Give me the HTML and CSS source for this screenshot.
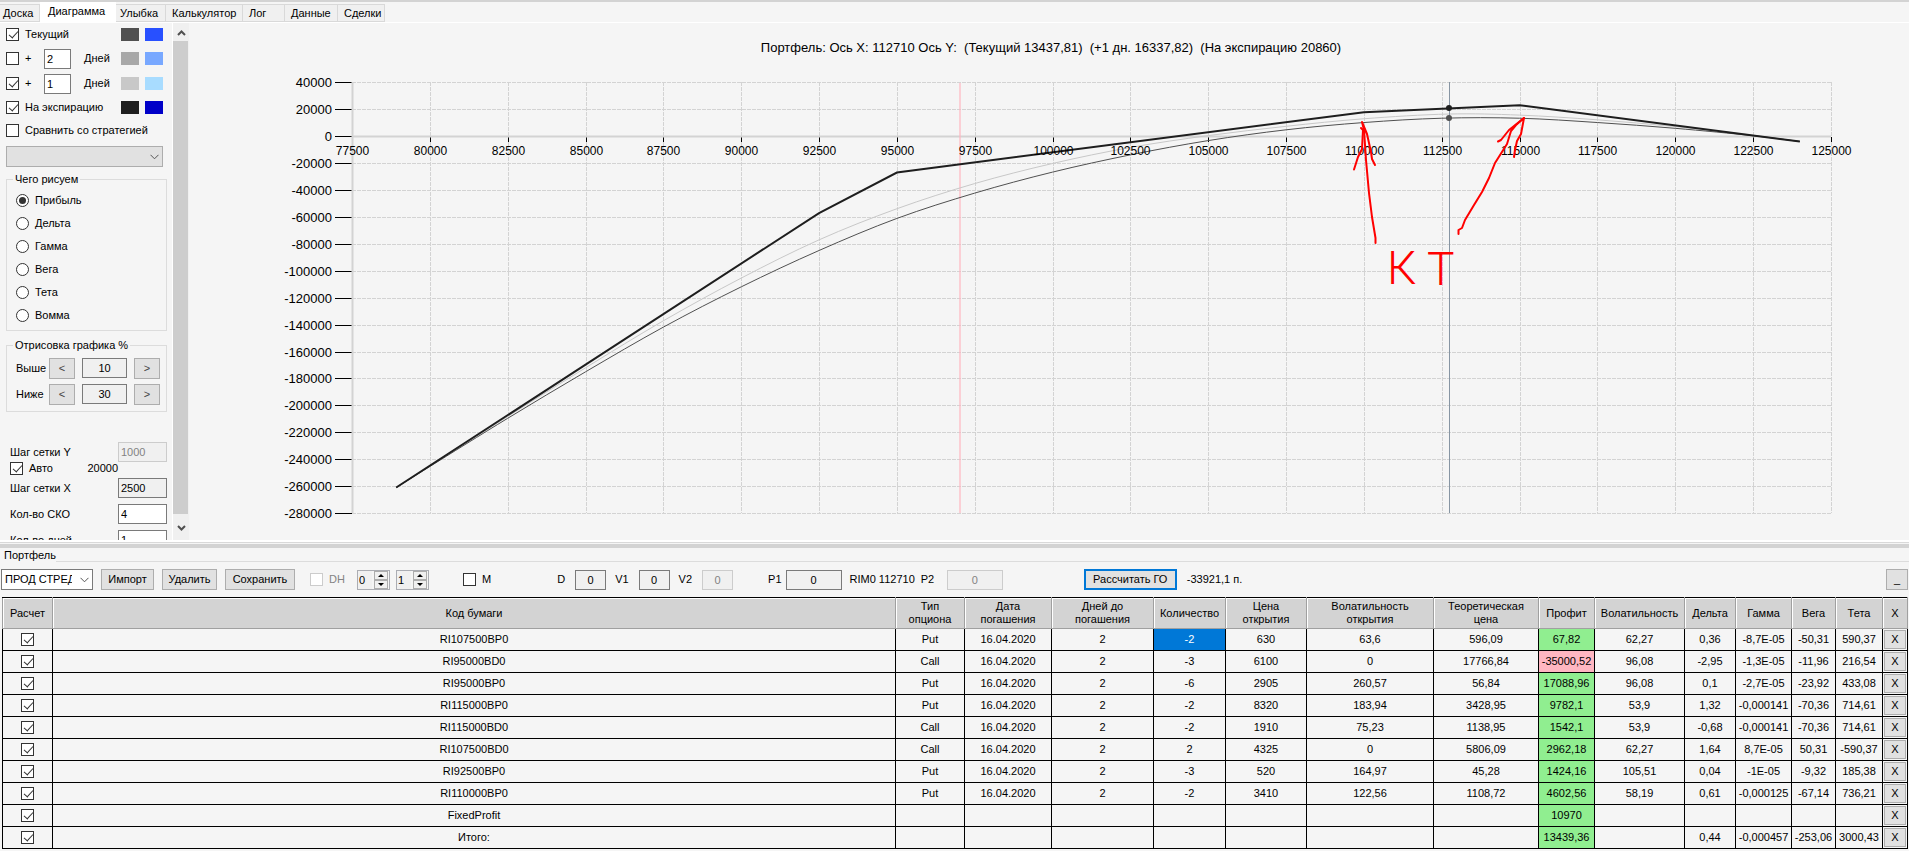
FILE: index.html
```html
<!DOCTYPE html>
<html lang="ru">

<head>
    <meta charset="UTF-8">
    <meta name="viewport" content="width=device-width, initial-scale=1.0">
    <title>Портфель</title>
    <link rel="stylesheet" href="styles.css">
</head>

<body>
<nav class="tabs">
    <button class="tab tab-board">Доска</button>
    <button class="tab tab-diagram active">Диаграмма</button>
    <button class="tab tab-smile">Улыбка</button>
    <button class="tab tab-calc">Калькулятор</button>
    <button class="tab tab-log">Лог</button>
    <button class="tab tab-data">Данные</button>
    <button class="tab tab-deals">Сделки</button>
</nav>

<main class="workspace">
    <aside class="sidebar">
        <div class="line">
            <input type="checkbox" id="current" checked>
            <label for="current" class="grow">Текущий</label>
            <i class="swatch c-dark"></i><i class="swatch c-blue"></i>
        </div>
        <div class="line line-input">
            <input type="checkbox" id="plus1">
            <label for="plus1" class="plus">+</label>
            <input type="text" class="days" id="days1" value="2">
            <label for="days1" class="grow">Дней</label>
            <i class="swatch c-gray"></i><i class="swatch c-sky"></i>
        </div>
        <div class="line line-input">
            <input type="checkbox" id="plus2" checked>
            <label for="plus2" class="plus">+</label>
            <input type="text" class="days" id="days2" value="1">
            <label for="days2" class="grow">Дней</label>
            <i class="swatch c-silver"></i><i class="swatch c-ice"></i>
        </div>
        <div class="line">
            <input type="checkbox" id="expiration" checked>
            <label for="expiration" class="grow">На экспирацию</label>
            <i class="swatch c-black"></i><i class="swatch c-navy"></i>
        </div>
        <div class="line">
            <input type="checkbox" id="compare">
            <label for="compare">Сравнить со стратегией</label>
        </div>
        <div class="combo combo-off">
            <select aria-label="Стратегия" disabled><option></option></select>
            <svg class="chevron" viewBox="0 0 9 6"><path d="M.5 .8 4.5 4.8 8.5 .8"/></svg>
        </div>

        <fieldset class="group">
            <legend>Чего рисуем</legend>
            <label class="option"><input type="radio" name="what" checked>Прибыль</label>
            <label class="option"><input type="radio" name="what">Дельта</label>
            <label class="option"><input type="radio" name="what">Гамма</label>
            <label class="option"><input type="radio" name="what">Вега</label>
            <label class="option"><input type="radio" name="what">Тета</label>
            <label class="option"><input type="radio" name="what">Вомма</label>
        </fieldset>

        <fieldset class="group range">
            <legend>Отрисовка графика %</legend>
            <div class="range-row">
                <label for="above">Выше</label>
                <button>&lt;</button>
                <input type="text" id="above" value="10" readonly>
                <button>&gt;</button>
            </div>
            <div class="range-row">
                <label for="below">Ниже</label>
                <button>&lt;</button>
                <input type="text" id="below" value="30" readonly>
                <button>&gt;</button>
            </div>
        </fieldset>

        <div class="steps">
            <div class="step">
                <label for="stepY">Шаг сетки Y</label>
                <input type="text" id="stepY" value="1000" disabled>
            </div>
            <div class="auto">
                <input type="checkbox" id="auto" checked>
                <label for="auto">Авто</label>
                <span>20000</span>
            </div>
            <div class="step">
                <label for="stepX">Шаг сетки X</label>
                <input type="text" id="stepX" value="2500" readonly>
            </div>
            <div class="step">
                <label for="sko">Кол-во СКО</label>
                <input type="text" id="sko" value="4">
            </div>
            <div class="step">
                <label for="dayCount">Кол-во дней</label>
                <input type="text" id="dayCount" value="1">
            </div>
        </div>
    </aside>

    <div class="scroll">
        <button aria-label="Вверх"><svg viewBox="0 0 9 6"><path d="M1 5 4.5 1.5 8 5"/></svg></button>
        <div class="thumb"></div>
        <button aria-label="Вниз"><svg viewBox="0 0 9 6"><path d="M1 1 4.5 4.5 8 1"/></svg></button>
    </div>

    <div class="chart">
        <svg viewBox="0 0 1720 517" preserveAspectRatio="xMinYMin meet">
            <text class="chart-title" x="862" y="29" xml:space="preserve">Портфель: Ось X: 112710 Ось Y:  (Текущий 13437,81)  (+1 дн. 16337,82)  (На экспирацию 20860)</text>
            <g id="grid"></g>
            <g id="series"></g>
            <g id="labels"></g>
            <g class="marks" transform="translate(-189 -23)">
                <path d="M1375.500 243 1375.500 238 1372 217 1369 193 1366 160 1364 130 1362 122 1367 134 1371 152 1372 159 1375 165"/>
                <path d="M1354 169.500 1358 157 1362 149 1363 130 1361 128"/>
                <path d="M1458.500 234 1458.500 230 1462 228 1465 220 1474 205 1482 192 1489 178 1495 163 1507 144 1511 131 1516 125 1524 118 1521 134 1517 141 1515 150 1514 157"/>
                <path d="M1498 141.500 1501 140 1509 130 1524 118"/>
                <text x="1387" y="284">К</text>
                <text x="1427" y="285">Т</text>
            </g>
        </svg>
    </div>
</main>

<div class="splitter"></div>

<fieldset class="portfolio">
    <legend>Портфель</legend>
    <div class="toolbar">
        <div class="tool-set">
            <div class="combo combo-name">
                <select aria-label="Портфель"><option>ПРОД СТРЕДЛ</option></select>
                <svg class="chevron" viewBox="0 0 9 6"><path d="M.5 .8 4.5 4.8 8.5 .8"/></svg>
            </div>
            <button class="btn btn-import">Импорт</button>
            <button class="btn btn-remove">Удалить</button>
            <button class="btn btn-save">Сохранить</button>
        </div>
        <div class="tool-set set-dh">
            <input type="checkbox" id="dh" disabled>
            <label for="dh" class="off">DH</label>
            <div class="spin">
                <input type="text" aria-label="DH 1" value="0">
                <span class="spin-buttons"><button aria-label="Больше"></button><button aria-label="Меньше"></button></span>
            </div>
            <div class="spin">
                <input type="text" aria-label="DH 2" value="1">
                <span class="spin-buttons"><button aria-label="Больше"></button><button aria-label="Меньше"></button></span>
            </div>
        </div>
        <div class="tool-set set-m">
            <input type="checkbox" id="m">
            <label for="m">M</label>
        </div>
        <div class="tool-set set-v">
            <label for="d">D</label><input type="text" id="d" value="0" readonly>
            <label for="v1">V1</label><input type="text" id="v1" value="0" readonly>
            <label for="v2">V2</label><input type="text" id="v2" value="0" disabled>
        </div>
        <div class="tool-set set-p">
            <label for="p1">P1</label><input type="text" id="p1" value="0" readonly>
            <span class="ticker">RIM0 112710</span>
            <label for="p2" class="p2">P2</label><input type="text" id="p2" value="0" disabled>
        </div>
        <div class="tool-set set-go">
            <button class="btn btn-go">Рассчитать ГО</button>
            <output>-33921,1 п.</output>
        </div>
        <button class="btn btn-min">_</button>
    </div>
    <table class="positions">
        <colgroup>
            <col class="w-check"><col><col class="w-type"><col class="w-date"><col class="w-days"><col class="w-count">
            <col class="w-price"><col class="w-vol-open"><col class="w-theory"><col class="w-profit"><col class="w-vol">
            <col class="w-delta"><col class="w-gamma"><col class="w-vega"><col class="w-theta"><col class="w-close">
        </colgroup>
        <thead>
        <tr>
            <th>Расчет</th>
            <th>Код бумаги</th>
            <th>Тип<br>опциона</th>
            <th>Дата<br>погашения</th>
            <th>Дней до<br>погашения</th>
            <th>Количество</th>
            <th>Цена<br>открытия</th>
            <th>Волатильность<br>открытия</th>
            <th>Теоретическая<br>цена</th>
            <th>Профит</th>
            <th>Волатильность</th>
            <th>Дельта</th>
            <th>Гамма</th>
            <th>Вега</th>
            <th>Тета</th>
            <th>X</th>
        </tr>
        </thead>
        <tbody id="rows"></tbody>
    </table>
</fieldset>

<script>
    const rows = [
      ['RI107500BP0', 'Put', '16.04.2020', '2', '-2', '630', '63,6', '596,09', '67,82', '62,27', '0,36', '-8,7E-05', '-50,31', '590,37'],
      ['RI95000BD0', 'Call', '16.04.2020', '2', '-3', '6100', '0', '17766,84', '-35000,52', '96,08', '-2,95', '-1,3E-05', '-11,96', '216,54'],
      ['RI95000BP0', 'Put', '16.04.2020', '2', '-6', '2905', '260,57', '56,84', '17088,96', '96,08', '0,1', '-2,7E-05', '-23,92', '433,08'],
      ['RI115000BP0', 'Put', '16.04.2020', '2', '-2', '8320', '183,94', '3428,95', '9782,1', '53,9', '1,32', '-0,000141', '-70,36', '714,61'],
      ['RI115000BD0', 'Call', '16.04.2020', '2', '-2', '1910', '75,23', '1138,95', '1542,1', '53,9', '-0,68', '-0,000141', '-70,36', '714,61'],
      ['RI107500BD0', 'Call', '16.04.2020', '2', '2', '4325', '0', '5806,09', '2962,18', '62,27', '1,64', '8,7E-05', '50,31', '-590,37'],
      ['RI92500BP0', 'Put', '16.04.2020', '2', '-3', '520', '164,97', '45,28', '1424,16', '105,51', '0,04', '-1E-05', '-9,32', '185,38'],
      ['RI110000BP0', 'Put', '16.04.2020', '2', '-2', '3410', '122,56', '1108,72', '4602,56', '58,19', '0,61', '-0,000125', '-67,14', '736,21'],
      ['FixedProfit', '', '', '', '', '', '', '', '10970', '', '', '', '', ''],
      ['Итого:', '', '', '', '', '', '', '', '13439,36', '', '0,44', '-0,000457', '-253,06', '3000,43']
    ]
    document.querySelector('#rows').innerHTML = rows.map((row, n) => {
      const cells = row.map((value, i) => {
        let cls = ''
        if (i === 8) cls = value[0] === '-' ? 'loss' : 'gain'
        if (n === 0 && i === 4) cls = 'selected'
        return `<td class="${cls}">${value}</td>`
      }).join('')
      return `<tr><td><input type="checkbox" aria-label="${row[0]}" checked></td>${cells}<td class="close"><button>X</button></td></tr>`
    }).join('')
</script>

<script>
    // plot area: price goes right, profit (thousands) goes up
    const X = price => 163 + (price - 77500) * 1479 / 47500
    const Y = profit => 113 - profit * 431 / 320
    const line = (cls, x1, y1, x2, y2) => `<line class="${cls}" x1="${x1}" y1="${y1}" x2="${x2}" y2="${y2}"/>`

    let grid = ''
    let labels = ''
    for (let v = 40; v >= -280; v -= 20) {
      const y = Math.round(Y(v)) + 0.5
      grid += line('dash', 163, y, 1642, y) + line('tick', 146, y, 163, y)
      labels += `<text class="label-y" x="143" y="${y + 4}">${v * 1000}</text>`
    }
    for (let p = 77500; p <= 125000; p += 2500) {
      const x = Math.round(X(p)) + 0.5
      grid += line('dash', x, 59, x, 490) + line('tick', x, 114, x, 119)
      labels += `<text class="label-x" x="${x}" y="132">${p}</text>`
    }
    grid += line('axis', 163.5, 59, 163.5, 490) + line('axis', 163, 113.5, 1642, 113.5)
    grid += line('deviation', 771, 60, 771, 490)

    const expiration = [[78920, -261], [92500, -57.2], [95000, -27.1], [110000, 17.7], [115000, 22.9], [124000, -4.1]]
    const plusDay = [[78920, -261], [80000, -245], [82500, -208.3], [85000, -172.1], [87500, -137.2], [90000, -105.5],
      [92500, -77.1], [95000, -54], [97500, -35.3], [100000, -20.4], [102500, -8.5], [105000, 0.3], [107500, 7.2],
      [110000, 12.8], [112710, 16.3], [115000, 15.5], [117500, 12], [120000, 7], [122500, 0.5], [124000, -4.1]]
    const current = [[78920, -261], [80000, -245.4], [82500, -209.6], [85000, -175.1], [87500, -141.9], [90000, -112],
      [92500, -85], [95000, -61.2], [97500, -42.4], [100000, -26.8], [102500, -14], [105000, -3.4], [107500, 4.6],
      [110000, 10], [112500, 13.2], [115000, 13.2], [117500, 10], [120000, 5.7], [122500, 0.2], [124000, -4.1]]

    const straight = pts => 'M' + pts.map(p => X(p[0]) + ' ' + Y(p[1])).join('L')
    function smooth(data) {
      const p = data.map(d => [X(d[0]), Y(d[1])])
      let d = 'M' + p[0]
      for (let i = 0; i < p.length - 1; i++) {
        const a = p[i - 1] || p[i], b = p[i], c = p[i + 1], e = p[i + 2] || c
        d += `C${b[0] + (c[0] - a[0]) / 6} ${b[1] + (c[1] - a[1]) / 6} ${c[0] - (e[0] - b[0]) / 6} ${c[1] - (e[1] - b[1]) / 6} ${c}`
      }
      return d
    }

    document.querySelector('#grid').innerHTML = grid
    document.querySelector('#labels').innerHTML = labels
    document.querySelector('#series').innerHTML =
      `<path class="s-plus" d="${smooth(plusDay)}"/>` +
      `<path class="s-current" d="${smooth(current)}"/>` +
      `<path class="s-expiration" d="${straight(expiration)}"/>` +
      line('price', 1260.5, 59, 1260.5, 490) +
      `<circle cx="1260" cy="${Y(20.86)}" r="3" class="dot-expiration"/>` +
      `<circle cx="1260" cy="${Y(13.44)}" r="3" class="dot-current"/>`
</script>
</body>

</html>
```
FILE: styles.css
```css
* {
  box-sizing: border-box;
}
body {
  margin: 0;
  height: 100vh;
  display: flex;
  flex-direction: column;
  overflow: hidden;
  background: #f5f5f5;
  border-top: 2px solid #d3d3d3;
  color: #000;
  font: 11px/13px "Liberation Sans", Arial, sans-serif;
}
button, input, select {
  margin: 0;
  color: inherit;
  font: inherit;
  border-radius: 0;
}
button {
  padding: 0;
  border: 1px solid #adadad;
  background: #e1e1e1;
}
input[type=text] {
  height: 20px;
  padding: 0 2px;
  border: 1px solid #7a7a7a;
  background: #fff;
}
input[readonly] {
  background: #f0f0f0;
}
input[type=text]:disabled {
  border-color: #ccc;
  background: #f0f0f0;
  color: #838383;
}

/* check boxes and radios */
input[type=checkbox], input[type=radio] {
  appearance: none;
  flex: none;
  display: grid;
  width: 13px;
  height: 13px;
  border: 1px solid #333;
  background: #fff;
}
input[type=checkbox]:disabled {
  border-color: #ccc;
}
input[type=checkbox]:checked::after {
  content: "";
  width: 4px;
  height: 8px;
  margin: 0 0 2px 4px;
  border: solid #333;
  border-width: 0 1px 1px 0;
  transform: rotate(42deg);
}
input[type=radio] {
  border-radius: 50%;
}
input[type=radio]:checked::after {
  content: "";
  width: 7px;
  height: 7px;
  margin: 2px;
  border-radius: 50%;
  background: #333;
}

/* tabs */
.tabs {
  flex: none;
  display: flex;
  align-items: flex-end;
  height: 21px;
  border-bottom: 1px solid #fff;
}
.tab {
  height: 18px;
  padding: 0 0 0 4px;
  border: solid #d9d9d9;
  border-width: 1px 1px 1px 0;
  background: #f0f0f0;
  text-align: left;
}
.tab.active {
  height: 20px;
  padding: 0 0 2px 8px;
  border-color: #fff;
  background: #fff;
}
.tab-board { width: 40px; padding-left: 3px; }
.tab-diagram { width: 76px; }
.tab-smile { width: 50px; }
.tab-calc { width: 77px; padding-left: 6px; }
.tab-log { width: 42px; padding-left: 6px; }
.tab-data { width: 53px; padding-left: 6px; }
.tab-deals { width: 47px; padding-left: 6px; }

/* chart and its settings */
.workspace {
  flex: 1;
  min-height: 0;
  display: flex;
}
.sidebar {
  flex: none;
  width: 173px;
  padding: 0 9px 0 6px;
  overflow: hidden;
  border-right: 1px solid #fff;
}
.line {
  display: flex;
  align-items: center;
  height: 23px;
  gap: 6px;
}
.line-input {
  height: 25px;
}
.grow {
  flex: 1;
}
.plus {
  width: 13px;
}
.days {
  width: 27px;
  margin-right: 7px;
}
.swatch {
  width: 18px;
  height: 13px;
}
.c-dark { background: #505050; }
.c-blue { background: #2850ff; }
.c-gray { background: #a8a8a8; }
.c-sky { background: #78a8ff; }
.c-silver { background: #c8c8c8; }
.c-ice { background: #a8dcff; }
.c-black { background: #1e1e1e; }
.c-navy { background: #0000c8; }
.combo {
  position: relative;
}
.combo select {
  appearance: none;
  display: block;
  width: 100%;
  height: 21px;
  padding: 0 20px 0 3px;
  border: 1px solid #7a7a7a;
  background: #fff;
}
.combo-off {
  margin: 4px 0 0;
  width: 157px;
}
.combo-off select {
  border-color: #adadad;
  background: #e1e1e1;
  opacity: 1;
}
.chevron {
  position: absolute;
  right: 4px;
  top: 8px;
  width: 9px;
  height: 6px;
  fill: none;
  stroke: #555;
  pointer-events: none;
}
.group {
  width: 161px;
  margin: 6px 0 0;
  padding: 3px 9px;
  border: 1px solid #dcdcdc;
}
.group legend {
  margin-left: -3px;
  padding: 0 2px;
}
.range {
  min-width: 0;
  margin-top: 8px;
  padding: 3px 6px 4px 9px;
}
.option {
  display: flex;
  align-items: center;
  gap: 6px;
  height: 23px;
}
.range-row {
  display: flex;
  align-items: center;
  height: 26px;
}
.range-row label {
  width: 33px;
}
.range-row button {
  width: 26px;
  height: 21px;
  color: #444;
}
.range-row input {
  width: 45px;
  margin: 0 7px;
  text-align: center;
}
.steps {
  width: 161px;
  margin-top: 30px;
  padding-left: 4px;
}
.step {
  display: flex;
  justify-content: space-between;
  align-items: center;
  margin-bottom: 6px;
}
.step input {
  width: 49px;
}
.auto {
  display: flex;
  align-items: center;
  gap: 6px;
  margin: -6px 49px 3px 0;
}
.auto span {
  margin-left: auto;
}
.scroll {
  flex: none;
  display: flex;
  flex-direction: column;
  width: 16px;
  background: #f0f0f0;
}
.scroll button {
  height: 18px;
  border: 0;
  background: none;
}
.scroll button:last-child {
  height: 26px;
}
.scroll svg {
  width: 9px;
  height: 6px;
  fill: none;
  stroke: #505050;
  stroke-width: 2;
}
.thumb {
  flex: 1;
  margin-right: 1px;
  background: #cdcdcd;
}
.chart {
  flex: 1;
  min-width: 0;
}
.chart svg {
  display: block;
  width: 100%;
  height: 100%;
}
.chart-title {
  font-size: 13px;
  text-anchor: middle;
}
.label-y {
  font-size: 13px;
  text-anchor: end;
}
.label-x {
  font-size: 12px;
  text-anchor: middle;
}
.dash {
  stroke: #d3d3d3;
  stroke-dasharray: 4 1;
}
.tick {
  stroke: #000;
}
.axis {
  stroke: #d3d3d3;
  stroke-width: 2;
}
.deviation {
  stroke: #ffb6c1;
  stroke-width: 2;
  opacity: .6;
}
.price {
  stroke: #8795a3;
}
#series path {
  fill: none;
}
#series .s-plus {
  stroke: #c8c8c8;
}
#series .s-current {
  stroke: #505050;
}
#series .s-expiration {
  stroke: #1e1e1e;
  stroke-width: 2;
}
.dot-expiration {
  fill: #1e1e1e;
}
.dot-current {
  fill: #505050;
}
.marks path {
  fill: none;
  stroke: #f00;
  stroke-width: 2;
  stroke-linecap: round;
  stroke-linejoin: round;
}
.marks text {
  fill: #f00;
  font: 300 46px Roboto, sans-serif;
}
.splitter {
  flex: none;
  height: 8px;
  border-top: 2px solid #fff;
  border-bottom: 4px solid #d3d3d3;
  background: linear-gradient(#d9d9d9 50%, #f5f5f5 50%);
}

/* portfolio */
.portfolio {
  flex: none;
  min-width: 0;
  margin: 0;
  padding: 0 1px 2px 2px;
  border: 0;
  background: linear-gradient(#dcdcdc, #dcdcdc) 56px 6px / 100% 1px no-repeat;
}
.portfolio legend {
  padding: 0 2px;
  line-height: 14px;
}
.toolbar {
  display: flex;
  align-items: center;
  height: 35px;
  margin: 0 0 0 -1px;
}
.tool-set {
  display: flex;
  align-items: center;
}
.tool-set > .btn {
  margin-left: 8px;
}
.btn {
  height: 21px;
}
.combo-name {
  width: 92px;
}
.combo-name select {
  overflow: hidden;
  text-overflow: clip;
}
.btn-import { width: 53px; }
.btn-remove { width: 55px; }
.btn-save { width: 70px; }
.set-dh {
  margin-left: 15px;
  gap: 6px;
}
.off {
  width: 22px;
  color: #838383;
}
.spin {
  display: flex;
  width: 33px;
  height: 20px;
  border: 1px solid #abadb3;
}
.spin input[type=text] {
  width: 14px;
  height: 18px;
  padding: 0 1px;
  border: 0;
  background: #f0f0f0;
}
.spin-buttons {
  display: flex;
  flex-direction: column;
  flex: 1;
  margin: 0 1px 0 2px;
}
.spin-buttons button {
  display: grid;
  place-items: center;
  flex: 1;
  background: #f0f0f0;
}
.spin-buttons button::after {
  content: "";
  border: solid transparent;
  border-width: 0 3px 3px;
  border-bottom-color: #000;
}
.spin-buttons button:last-child::after {
  transform: rotate(180deg);
}
.set-m {
  margin-left: 34px;
  gap: 6px;
}
.set-v {
  margin-left: 66px;
}
.set-v input {
  width: 31px;
  margin: 0 9px 0 10px;
}
.set-v input, .set-p input {
  text-align: center;
}
.set-p {
  margin-left: 26px;
  gap: 4px;
}
#p1, #p2 {
  width: 56px;
}
.ticker {
  margin: 0 2px 0 4px;
}
.p2 {
  width: 22px;
}
.set-go {
  margin-left: 73px;
  gap: 10px;
}
.btn-go {
  width: 93px;
  border: 2px solid #0078d7;
}
.btn-min {
  width: 22px;
  margin-left: auto;
}
.positions {
  width: 100%;
  table-layout: fixed;
  border-collapse: collapse;
  border: 1px solid #000;
  text-align: center;
}
.positions th, .positions td {
  padding: 0;
  white-space: nowrap;
}
.positions th {
  height: 31px;
  border: 1px solid #a0a0a0;
  border-top-color: #000;
  background: #d3d3d3;
  box-shadow: inset 1px 1px #fff;
  font-weight: normal;
}
.positions td {
  height: 22px;
  border: 1px solid #000;
}
.positions input {
  margin: 0 auto;
}
.positions .selected {
  background: #0078d7;
  color: #fff;
}
.positions .gain {
  background: #90ee90;
}
.positions .loss {
  background: #ffb6c1;
}
.close button {
  display: block;
  width: calc(100% - 2px);
  height: 19px;
  margin: 0 auto;
}
.w-check { width: 50px; }
.w-type { width: 69px; }
.w-date { width: 87px; }
.w-days { width: 102px; }
.w-count { width: 72px; }
.w-price { width: 81px; }
.w-vol-open { width: 127px; }
.w-theory { width: 105px; }
.w-profit { width: 56px; }
.w-vol { width: 90px; }
.w-delta { width: 51px; }
.w-gamma { width: 56px; }
.w-vega { width: 44px; }
.w-theta { width: 47px; }
.w-close { width: 25px; }
```
